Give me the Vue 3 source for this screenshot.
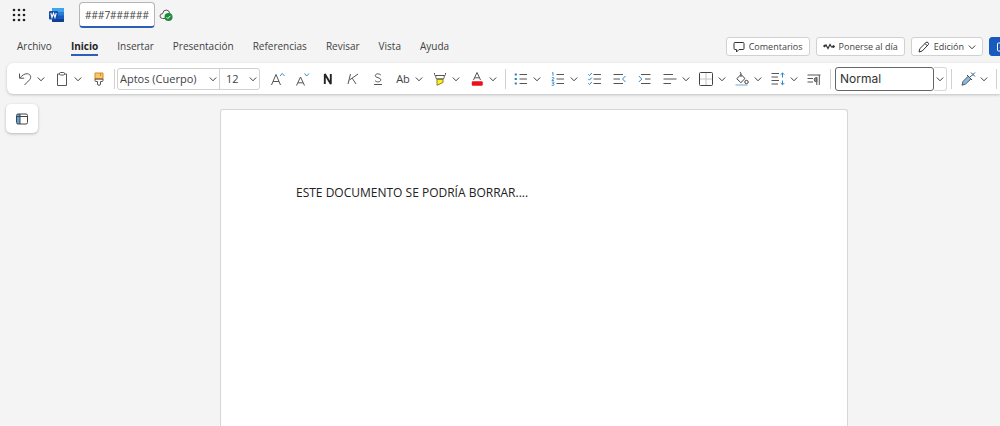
<script setup>
import { ref } from 'vue'

const title = ref('###7######')
const font = ref('Aptos (Cuerpo)')
const size = ref('12')
const style = ref('Normal')
const active = ref('Inicio')
const tabs = ['Archivo', 'Inicio', 'Insertar', 'Presentación', 'Referencias', 'Revisar', 'Vista', 'Ayuda']

const lines = '<path d="M6.5 3.5H14M6.5 8H14M6.5 12.5H14"/>'
const history = [
  { label: 'Deshacer', menu: true, art: '<path d="M2.5 2.5v4.700h4.700M2.800 7C5 4.500 7.500 2.500 10.300 2.700c3.200.3 4.400 3.600 2.400 6L7.500 14"/>' },
  { label: 'Pegar', menu: true, art: '<path d="M5.500 3H3.500v11.500h9V3h-2"/><rect x="5.500" y="1.500" width="5" height="2.500" rx="1"/>' },
  { label: 'Copiar formato', art: '<path d="M4 2h8v6H4z" fill="#fbc56d" stroke="#d98a1c"/><path d="M9.500 2v3" stroke="#d98a1c"/><path d="M4 8v1.500q0 1 1 1h1.500V13q0 1.300 1.500 1.300T9.500 13v-2.500H11q1 0 1-1V8z"/>' },
]
const fontTools = [
  { label: 'Aumentar tamaño de fuente', art: '<path d="M1.500 14L6 3.500 10.500 14M3 10.500h6"/><path d="M10 5l2.200-2.500L14.500 5" stroke="#3a8bbd"/>' },
  { label: 'Reducir tamaño de fuente', art: '<path d="M1.500 14.500L5.500 6l4 8.500M3 11.800h5"/><path d="M9.500 2.500L11.700 5 14 2.500" stroke="#3a8bbd"/>' },
  { label: 'Negrita', art: '<path d="M4.800 13V3l6 10V3" stroke="#242424" stroke-width="1.900" stroke-linejoin="bevel"/>' },
  { label: 'Cursiva', art: '<path d="M5.500 3L3 13M13 3L4.500 9M7.200 7.200L11 13"/>' },
  { label: 'Subrayado', art: '<path d="M10.800 4C9 2.200 5.200 2.500 5.300 4.800c.1 2.400 5.500 1.500 5.500 4 0 2.400-4 2.700-5.800.8M4 13.500h8"/>' },
  { label: 'Más opciones de fuente', menu: true, text: 'Ab' },
  { label: 'Color de resaltado', menu: true, art: '<path d="M5 8h6v3.500L5 14.300z" fill="#ffee22" stroke="#8b8420"/><path d="M2.500 2v1.500q0 1 1 1h9q1 0 1-1V2M3.800 4.500v2q0 1.500 1.500 1.500h5.400q1.500 0 1.500-1.500v-2"/>' },
  { label: 'Color de fuente', menu: true, art: '<path d="M4.500 9L8 1.500 11.500 9M5.700 6.800h4.600"/><rect x="3" y="10.500" width="10.500" height="4" rx=".8" fill="#ed0f19" stroke="#ed0f19" stroke-width=".5"/>' },
]
const listTools = [
  { label: 'Viñetas', menu: true, art: lines + '<path d="M1.700 3.500h2.200M1.700 8h2.200M1.700 12.500h2.200" stroke="#2b88c8" stroke-width="2.200"/>' },
  { label: 'Numeración', menu: true, art: lines + '<path d="M2 2.200l1-.7v3.300M1.800 6.800q2.200-.8 2.200.4 0 .6-2.200 2.200H4M1.800 11.200q2.200-.7 2.200.4 0 .9-1.300.9 1.300 0 1.300 1 0 1.400-2.300.7" stroke="#2b88c8" stroke-width=".9"/>' },
  { label: 'Lista de comprobación', art: lines + '<path d="M1.300 3.300l1.200 1.300L4.800 2M1.300 7.800l1.200 1.300 2.300-2.600M1.300 12.300l1.200 1.300 2.300-2.600" stroke="#2b88c8"/>' },
  { label: 'Reducir sangría', art: '<path d="M1.500 3.500H11M1.500 8H8M1.500 12.500H11"/><path d="M13.500 5L10.500 8l3 3" stroke="#2b88c8"/>' },
  { label: 'Aumentar sangría', art: '<path d="M4 3.500h9.500M8 8h5.500M4 12.500h9.500"/><path d="M1.800 5L4.800 8l-3 3" stroke="#2b88c8"/>' },
]
const paraTools = [
  { label: 'Alineación', menu: true, art: '<path d="M1.500 3.500H11M1.500 8h13M1.500 12.500H9"/>' },
  { label: 'Bordes', menu: true, art: '<path d="M8 2v12M2 8h12" stroke="#c4c4c4"/><rect x="1.500" y="1.500" width="13" height="13" rx="1" stroke="#424242"/>' },
  { label: 'Sombreado', menu: true, art: '<path d="M1.500 14h12" stroke="#b9d3ea" stroke-width="2"/><path d="M7 3.500l4 4-4.200 4.200-4-4zM7 6V2.800Q7 1.300 5.800 1.300" stroke="#424242"/><circle cx="12.500" cy="11" r="1.700" stroke="#424242"/>' },
  { label: 'Interlineado', menu: true, art: '<path d="M1.500 2.500H9M1.500 6H8M1.500 9.500H9M1.500 13H8"/><path d="M12.500 6.500V2M10.700 3.700l1.800-1.800 1.800 1.800M12.500 9.500v4M10.700 12l1.800 1.800 1.800-1.800" stroke="#2b88c8"/>' },
  { label: 'Marcas de párrafo', art: '<path d="M1.500 4h13M1.500 7.500H7M1.500 11H7M13.300 4v10M10.800 6.500v7.500"/><path d="M10.800 6.500Q8.200 6.500 8.200 8.700t2.600 2.200z" fill="#9a9a9a"/>' },
]
const designTools = [
  { label: 'Diseñador', menu: true, art: '<path d="M2 14.200L3 10.500 8.200 5.200l2.700 2.700L5.600 13z" fill="#8bbce4"/><path d="M7 4l5 5" stroke="#424242"/><path d="M9.500 6.500l2-2M11 1.500l4 4M15 1.500l-4 4" stroke="#2d6488"/>' },
]
const groups = [
  { name: 'history', label: 'Portapapeles', tools: history },
  { name: 'font', label: 'Fuente', tools: fontTools },
  { name: 'list', label: 'Listas', tools: listTools },
  { name: 'para', label: 'Párrafo', tools: paraTools },
  { name: 'design', label: 'Diseñador', tools: designTools },
]
</script>

<template>
  <div class="app">
    <header class="titlebar">
      <button class="plain" aria-label="Iniciador de aplicaciones">
        <svg width="14" height="14" viewBox="0 0 14 14" fill="#222">
          <template v-for="r in 3" :key="r">
            <circle v-for="c in 3" :key="c" :cx="c * 5 - 3" :cy="r * 5 - 3" r="1.3" />
          </template>
        </svg>
      </button>
      <a class="logo" href="#" aria-label="Word">
        <svg width="17" height="16" viewBox="0 0 17 16">
          <rect x="4" y="1" width="12" height="14" rx="1" fill="#185abd" />
          <path d="M4 5V2q0-1 1-1h10q1 0 1 1v3z" fill="#41a5ee" />
          <path d="M4 5h12v3.500H4z" fill="#2b7cd3" />
          <path d="M4 12h12v2q0 1-1 1H5q-1 0-1-1z" fill="#103f91" />
          <rect x="1" y="4" width="9" height="8.500" rx="1" fill="#144fae" />
          <path d="M2.800 6l1.200 4.500L5.500 6.200 7 10.500 8.200 6" fill="none" stroke="#fff" stroke-width="1.100" />
        </svg>
      </a>
      <input v-model="title" class="doc-title" aria-label="Nombre del documento" />
      <button class="plain" aria-label="Guardado">
        <svg width="14" height="14" viewBox="0 0 14 14" fill="none">
          <path d="M6 10.500H3.500Q1 10.300 1 8t2.700-2.400Q4.200 2 7.200 2t3.600 3.500" stroke="#555" />
          <circle cx="9.500" cy="9" r="4" fill="#1b8a3c" />
          <path d="M7.600 9.200l1.300 1.300 2.500-2.700" stroke="#fff" />
        </svg>
      </button>
    </header>

    <div class="tabbar">
      <nav class="tabs" aria-label="Cinta">
        <button v-for="t in tabs" :key="t" class="tab" :class="{ active: t === active }" @click="active = t">{{ t }}</button>
      </nav>
      <div class="actions">
        <button class="action">
          <svg class="glyph" viewBox="0 0 12 12"><path d="M2 1.500h8q1 0 1 1v5q0 1-1 1H6L3.500 11V8.500H2q-1 0-1-1v-5q0-1 1-1z" /></svg>
          Comentarios
        </button>
        <button class="action">
          <svg class="glyph" viewBox="0 0 12 12"><path d="M1 5.500L3 4l2 3.500L7 3.500 8.500 6H10" stroke-width="1.200" /><circle cx="1.500" cy="5" r=".8" fill="#333" /><circle cx="10.500" cy="5.500" r=".9" fill="#333" /></svg>
          Ponerse al día
        </button>
        <button class="action">
          <svg class="glyph" viewBox="0 0 12 12"><path d="M1 11l.8-3.300L8 1.500q1-.8 2 0t.3 2.200L4.200 10zM7 2.500L9.500 5" /></svg>
          Edición
          <svg class="chev" viewBox="0 0 8 8"><path d="M.8 2.500L4 5.800l3.200-3.300" /></svg>
        </button>
        <button class="action share" aria-label="Compartir">
          <svg class="glyph" viewBox="0 0 12 12"><path d="M5 2H2.500q-1 0-1 1v6q0 1 1 1h6q1 0 1-1V8M4 7q1-3 4-3M7 1.500L10 4 7 6.500" /></svg>
        </button>
      </div>
    </div>

    <div class="ribbon" role="toolbar" aria-label="Inicio">
      <template v-for="g in groups" :key="g.name">
        <div v-if="g.name === 'font'" class="combo">
          <label class="pick family">
            <select v-model="font" aria-label="Fuente"><option>Aptos (Cuerpo)</option></select>
            <svg class="chev" viewBox="0 0 8 8"><path d="M.8 2.500L4 5.800l3.200-3.300" /></svg>
          </label>
          <label class="pick points">
            <select v-model="size" aria-label="Tamaño de fuente"><option>12</option></select>
            <svg class="chev" viewBox="0 0 8 8"><path d="M.8 2.500L4 5.800l3.200-3.300" /></svg>
          </label>
        </div>
        <div v-if="g.name === 'design'" class="styles">
          <input v-model="style" aria-label="Estilo" />
          <button aria-label="Más estilos">
            <svg class="chev" viewBox="0 0 8 8"><path d="M.8 2.500L4 5.800l3.200-3.300" /></svg>
          </button>
        </div>
        <span v-if="g.name === 'design'" class="rule" />
        <div class="group" :class="g.name" role="group" :aria-label="g.label">
          <div v-for="t in g.tools" :key="t.label" class="tool">
            <button class="main" :aria-label="t.label" :title="t.label">
              <span v-if="t.text">{{ t.text }}</span>
              <svg v-else class="icon" viewBox="0 0 16 16" v-html="t.art" />
            </button>
            <button v-if="t.menu" class="more" :aria-label="'Opciones: ' + t.label">
              <svg class="chev" viewBox="0 0 8 8"><path d="M.8 2.500L4 5.800l3.200-3.300" /></svg>
            </button>
          </div>
        </div>
        <span v-if="g.name !== 'list'" class="rule" />
      </template>
    </div>

    <main class="workspace">
      <aside class="rail">
        <button class="nav" aria-label="Panel de navegación">
          <svg width="12" height="12" viewBox="0 0 12 12" fill="none" stroke="#444">
            <rect x="1" y="1" width="3" height="10" fill="#5aa6dc" stroke="none" />
            <rect x=".5" y="1" width="11" height="10" rx="1.500" />
            <path d="M.5 3.500h11M4 1v10" />
          </svg>
        </button>
      </aside>
      <div class="canvas">
        <article class="page"><p>ESTE DOCUMENTO SE PODRÍA BORRAR....</p></article>
      </div>
    </main>
  </div>
</template>

<style>
body { margin: 0; background: #f4f4f4; }
</style>

<style scoped>
.app {
  display: flex;
  flex-direction: column;
  min-height: 100vh;
  overflow: hidden;
  background: #f4f4f4;
  color: #424242;
  font-family: "Open Sans", "Noto Sans", sans-serif;
  font-size: 11px;
}
.app * { box-sizing: border-box; }
button, input, select { margin: 0; padding: 0; border: 0; background: none; color: inherit; font: inherit; }
svg { display: block; flex: none; }

.titlebar { display: flex; align-items: center; height: 30px; padding-left: 12px; }
.logo { margin: 0 14px 0 22px; }
.doc-title {
  width: 76px;
  height: 26px;
  margin-right: 4px;
  padding: 0 5px;
  border: 1px solid #b5b5b5;
  border-bottom: 2px solid #2b5fb8;
  border-radius: 4px;
  background: #fff;
  font-size: 10px;
}

.tabbar { display: flex; justify-content: space-between; height: 33px; }
.tabs { display: flex; gap: 19px; padding-left: 17px; }
.tab { height: 22px; margin-top: 4px; padding-top: 4px; white-space: nowrap; border-bottom: 2px solid transparent; font-size: 10px; }
.tab.active { border-bottom-color: #2b5fb8; color: #242424; font-weight: 700; }
.actions { display: flex; gap: 6px; padding-top: 7px; margin-right: -17px; }
.action {
  display: flex;
  align-items: center;
  gap: 4px;
  height: 19px;
  padding: 0 6px;
  border: 1px solid #d1d1d1;
  border-radius: 3px;
  background: #fff;
  font-size: 9px;
  white-space: nowrap;
}
.share { width: 28px; border-color: #185abd; background: #185abd; }
.share .glyph { stroke: #fff; }
.glyph { width: 12px; height: 12px; fill: none; stroke: #333; }
.chev { width: 8px; height: 8px; fill: none; stroke: #424242; }

.ribbon {
  display: flex;
  align-items: center;
  height: 31px;
  margin-left: 7px;
  padding-left: 8px;
  border-radius: 6px 0 0 6px;
  background: #fff;
  box-shadow: 0 1px 3px rgba(0, 0, 0, 0.22);
}
.ribbon > * { flex: none; }
.group { display: flex; gap: 5px; }
.group.history { margin-right: 5px; }
.group.font { margin: 0 6px 0 8px; }
.group.list { margin: 0 5px; }
.group.para { gap: 4px; margin-right: 6px; }
.group.design { margin: 0 6px; }
.tool { display: flex; }
.main { display: flex; align-items: center; justify-content: center; width: 20px; height: 24px; font-size: 11px; }
.more { display: flex; align-items: center; justify-content: center; width: 12px; height: 24px; }
.icon { width: 16px; height: 16px; fill: none; stroke: #555; stroke-width: 1; }
.rule { width: 1px; height: 20px; background: #d1d1d1; }

.combo { display: flex; height: 22px; margin-left: 2px; border: 1px solid #d1d1d1; border-radius: 3px; }
.pick { display: flex; align-items: center; position: relative; }
.pick select { width: 100%; height: 20px; appearance: none; outline: none; font-size: 11px; }
.pick .chev { position: absolute; right: 2px; pointer-events: none; }
.family { width: 101px; }
.family select { padding-left: 2px; }
.points { width: 40px; border-left: 1px solid #d1d1d1; }
.points select { padding-left: 6px; }

.styles { display: flex; align-items: center; height: 24px; margin: 0 4px; }
.styles input { width: 99px; height: 24px; padding: 0 4px; border: 1px solid #666; border-radius: 3px; font-family: Inter, sans-serif; font-size: 12px; color: #333; }
.styles button { display: flex; align-items: center; justify-content: center; width: 13px; height: 24px; border: 1px solid #d8d8d8; border-left: 0; border-radius: 0 3px 3px 0; }

.workspace { display: flex; flex: 1; }
.rail { width: 68px; padding: 10px 0 0 6px; }
.nav {
  display: flex;
  align-items: center;
  justify-content: center;
  width: 32px;
  height: 29px;
  border-radius: 5px;
  background: #fff;
  box-shadow: 0 1px 3px rgba(0, 0, 0, 0.25);
}
.canvas { display: flex; flex: 1; justify-content: center; padding-top: 15px; }
.page {
  width: 100%;
  max-width: 628px;
  padding: 75px;
  border: 1px solid #d6d6d6;
  border-bottom: 0;
  border-radius: 3px 3px 0 0;
  background: #fff;
}
.page p { margin: 0; font-size: 12px; line-height: 16px; color: #222; }
</style>
